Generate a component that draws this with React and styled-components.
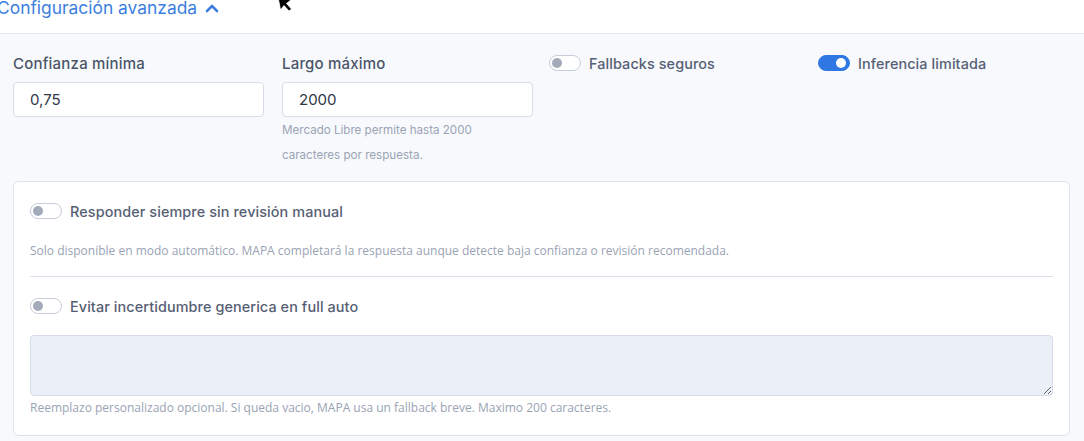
import React from "react";
import styled, { createGlobalStyle } from "styled-components";

const Global = createGlobalStyle`
  html, body { margin: 0; padding: 0; background: #f7f9fd; }
  body { font-family: "Inter", "Noto Sans", sans-serif; overflow: hidden; }
  * { box-sizing: border-box; }
`;

const Page = styled.div`
  width: 1084px;
  height: 441px;
  position: relative;
  overflow: hidden;
  background: #f7f9fd;
`;

const Header = styled.div`
  height: 34px;
  background: #ffffff;
  border-bottom: 1px solid #dfe4ee;
  display: flex;
  align-items: flex-start;
  margin-left: -3px;
`;

const HeaderTitle = styled.button`
  display: flex;
  align-items: center;
  gap: 8px;
  border: 0;
  background: none;
  padding: 0;
  margin-top: -4px;
  color: #3d7fe0;
  font-family: "Inter", sans-serif;
  font-size: 17.4px;
  line-height: 24px;
  letter-spacing: 0;
  cursor: pointer;
`;

const Cursor = styled.svg`
  position: absolute;
  left: 276px;
  top: -5px;
`;

const Body = styled.div`
  padding: 20px 14px 0 13px;
`;

const Grid = styled.div`
  display: grid;
  grid-template-columns: 251px 251px 251px 1fr;
  column-gap: 18px;
`;

const Field = styled.div`
  display: flex;
  flex-direction: column;
  margin-left: ${(p) => p.$shift || 0}px;
`;

const Label = styled.label`
  font-size: 15px;
  font-weight: 500;
  color: #4b5568;
  line-height: 20px;
  height: 20px;
  margin-bottom: 8px;
  letter-spacing: 0.2px;
`;

const Input = styled.input`
  height: 35px;
  width: 100%;
  border: 1px solid #d6dde9;
  border-radius: 4px;
  background: #fff;
  padding: 0 16px;
  font-family: "Inter", sans-serif;
  font-size: 15px;
  color: #2f3747;
  outline: none;
`;

const Hint = styled.div`
  font-size: 11.6px;
  color: #9ba4b5;
  line-height: 25px;
  margin-top: 1px;
`;

const ToggleRow = styled.label`
  display: flex;
  align-items: center;
  gap: 8px;
  height: 20px;
  margin-top: ${(p) => p.$lift || 0}px;
  font-size: 14.4px;
  font-weight: 500;
  color: #566074;
  letter-spacing: 0.1px;
`;

const Track = styled.span`
  position: relative;
  width: 32px;
  height: 16px;
  border-radius: 8px;
  flex: none;
  border: 1px solid ${(p) => (p.$on ? "#2f78e4" : "#c5cdd9")};
  background: ${(p) => (p.$on ? "#2f78e4" : "#ffffff")};
`;

const Knob = styled.span`
  position: absolute;
  top: 2px;
  left: ${(p) => (p.$on ? "17px" : "2px")};
  width: 10px;
  height: 10px;
  border-radius: 50%;
  background: ${(p) => (p.$on ? "#ffffff" : "#a3abba")};
`;

const Card = styled.div`
  margin-top: 13px;
  width: 1057px;
  background: #ffffff;
  border: 1px solid #dde3ed;
  border-radius: 6px;
  padding: 19px 16px 0 16px;
  height: 255px;
`;

const Desc = styled.div`
  font-family: "Open Sans", sans-serif;
  font-size: 12px;
  color: #9aa3b4;
  margin-top: 22px;
  line-height: 16px;
`;

const Divider = styled.div`
  height: 1px;
  background: #dbe1ea;
  margin: 17px 0 19px;
`;

const TextArea = styled.textarea`
  display: block;
  width: 100%;
  height: 61px;
  margin-top: 19px;
  background: #ebeff7;
  border: 1px solid #d6dde9;
  border-radius: 4px;
  resize: vertical;
  outline: none;
`;

const TextHint = styled.div`
  font-family: "Open Sans", sans-serif;
  font-size: 12px;
  color: #9aa3b4;
  margin-top: 4px;
  line-height: 16px;
`;

function Toggle({ on, lift, children }) {
  return (
    <ToggleRow $lift={lift}>
      <Track $on={on}>
        <Knob $on={on} />
      </Track>
      {children}
    </ToggleRow>
  );
}

export default function App() {
  return (
    <Page>
      <Global />
      <Header>
        <HeaderTitle>
          Configuración avanzada
          <svg width="14" height="10" viewBox="0 0 14 10">
            <path d="M2 8 L7 3 L12 8" fill="none" stroke="#3d7fe0" strokeWidth="2.6" strokeLinecap="round" strokeLinejoin="round" />
          </svg>
        </HeaderTitle>
      </Header>
      <Cursor width="20" height="20" viewBox="0 0 20 20">
        <path d="M2 2 L15 5 L10.5 8.5 L15.5 14 L13 16 L8 10.5 L4.5 15 Z" fill="#000" stroke="#fff" strokeWidth="0.8" />
      </Cursor>
      <Body>
        <Grid>
          <Field>
            <Label>Confianza mínima</Label>
            <Input defaultValue="0,75" />
          </Field>
          <Field>
            <Label>Largo máximo</Label>
            <Input defaultValue="2000" />
            <Hint>
              Mercado Libre permite hasta 2000
              <br />
              caracteres por respuesta.
            </Hint>
          </Field>
          <Field $shift={-2}>
            <Toggle lift={-1}>Fallbacks seguros</Toggle>
          </Field>
          <Field $shift={-2}>
            <Toggle on lift={-1}>Inferencia limitada</Toggle>
          </Field>
        </Grid>
        <Card>
          <Toggle>Responder siempre sin revisión manual</Toggle>
          <Desc>
            Solo disponible en modo automático. MAPA completará la respuesta aunque detecte baja confianza o revisión recomendada.
          </Desc>
          <Divider />
          <Toggle>Evitar incertidumbre generica en full auto</Toggle>
          <TextArea />
          <TextHint>
            Reemplazo personalizado opcional. Si queda vacio, MAPA usa un fallback breve. Maximo 200 caracteres.
          </TextHint>
        </Card>
      </Body>
    </Page>
  );
}
